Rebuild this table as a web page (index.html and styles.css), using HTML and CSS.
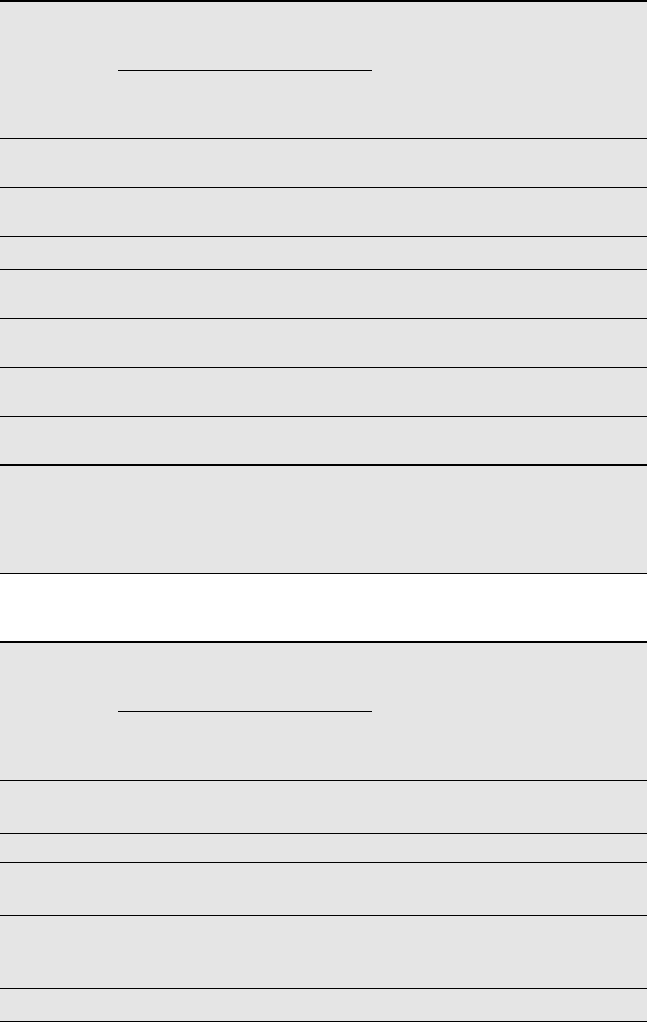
FILE: index.html
```html
<!DOCTYPE html>
<html>
<head>
<meta charset="utf-8">
<link rel="stylesheet" href="styles.css">
</head>
<body>
<div class="page">
  <section class="sheet">
    <div class="head"><div class="rule"></div></div>
    <div class="row h48"></div>
    <div class="row h48"></div>
    <div class="row h32"></div>
    <div class="row h48"></div>
    <div class="row h48"></div>
    <div class="row h48"></div>
    <div class="row h47 thick"></div>
    <div class="row h107"></div>
  </section>
  <div class="gap"></div>
  <section class="sheet">
    <div class="head h137"><div class="rule"></div></div>
    <div class="row h52"></div>
    <div class="row h28"></div>
    <div class="row h52"></div>
    <div class="row h72"></div>
    <div class="row h32"></div>
  </section>
</div>
</body>
</html>
```
FILE: styles.css
```css
html, body {
  margin: 0;
  padding: 0;
  background: #ffffff;
  font-family: "Liberation Sans", Arial, sans-serif;
}
.page {
  width: 647px;
  display: flex;
  flex-direction: column;
}
.sheet {
  background: #e5e5e5;
  border-top: 2px solid #000;
  display: flex;
  flex-direction: column;
}
.head {
  height: 68px;
  padding-top: 68px;
  border-bottom: 1px solid #000;
}
.head.h137 { height: 69px; }
.rule {
  margin-left: 118px;
  width: 254px;
  border-top: 1px solid #000;
}
.row {
  border-bottom: 1px solid #000;
}
.row.thick { border-bottom-width: 2px; }
.h28 { height: 28px; }
.h32 { height: 32px; }
.h47 { height: 47px; }
.h48 { height: 48px; }
.h52 { height: 52px; }
.h72 { height: 72px; }
.h107 { height: 107px; }
.gap { height: 67px; }
```
